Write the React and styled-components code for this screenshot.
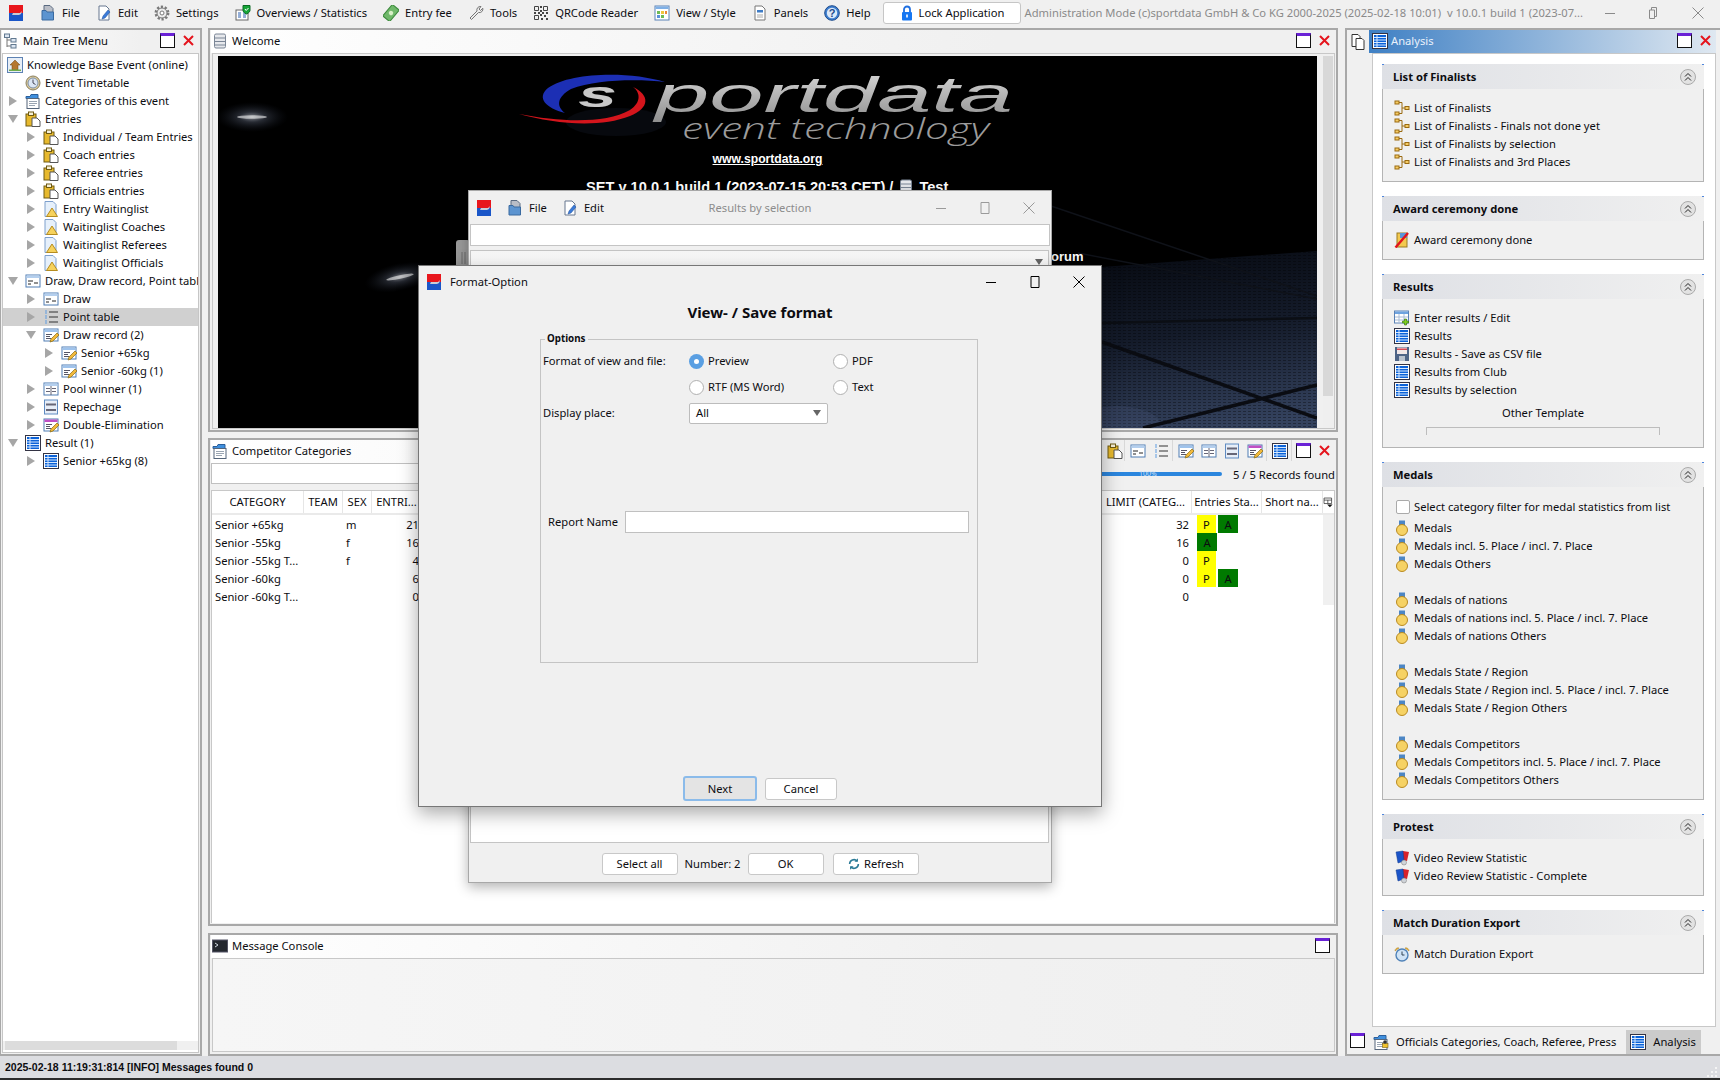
import React from 'react';
import styled, { createGlobalStyle } from 'styled-components';

const UI_FONT = '"Noto Sans", "Open Sans", sans-serif';

const GlobalStyle = createGlobalStyle`
  html, body {
    margin: 0;
    padding: 0;
    background: #f0f0f0;
    overflow: hidden;
  }
  * {
    box-sizing: border-box;
  }
`;

const IconSvg = styled.svg`
  flex: none;
  display: block;
  width: ${({ $size }) => $size || 16}px;
  height: ${({ $size }) => $size || 16}px;
`;

const page = 'M3 1h7l3 3v11H3z';
const sheet = (bar, lines) => (
  <>
    <rect x="1" y="2" width="14" height="12" fill="#fff" stroke="#4f7cb3" />
    <rect x="1.5" y="2.5" width="13" height="2.5" fill={bar} />
    {lines}
  </>
);
const pencil = <path d="M7 15l1-3 6-6 2 2-6 6z" fill="#f2b93b" stroke="#8a6a10" strokeWidth=".7" />;
const lineSet = (
  <path d="M3 7.5h6M3 9.5h4M3 11.5h5" stroke="#556" fill="none" />
);
const resultGlyph = (
  <>
    <rect x=".5" y=".5" width="15" height="15" fill="#fff" stroke="#334" />
    <rect x="2" y="2" width="12" height="12" fill="#0b62d8" />
    <path d="M2 4.500h12M2 7h12M2 9.500h12M2 12h12M5 2v12" stroke="#d6e8ff" />
  </>
);
const clipGlyph = (
  <>
    <rect x="1" y="3" width="10" height="12" fill="#e7b92d" stroke="#6f5a12" />
    <rect x="3.500" y="1" width="5" height="3.500" fill="#f6f0d8" stroke="#6f5a12" />
    <path d="M7 7h5l3 3v5.500H7z" fill="#fff" stroke="#555" />
  </>
);
const waitGlyph = (
  <>
    <path d="M2 .5h8l3 3v12H2z" fill="#e6f0fb" stroke="#7d9fcc" />
    <path d="M9 7l5.500 8.500h-11z" fill="#f6d25c" stroke="#b58c1f" />
  </>
);
const folderGlyph = (
  <>
    <path d="M1 3.500h4l1-2h7v4H1z" fill="#3f8fdd" stroke="#2a5f9c" />
    <rect x="2" y="5.500" width="12" height="10" fill="#fff" stroke="#55657a" />
    <path d="M4 8.500h8M4 10.500h8M4 12.500h6" stroke="#9aa5b2" />
  </>
);
const medalGlyph = (
  <>
    <rect x="5" y=".5" width="6" height="6" fill="#4d86c4" />
    <circle cx="8" cy="10" r="5.500" fill="#f6d264" stroke="#b98a20" />
  </>
);
const cardsGlyph = (
  <>
    <path d="M9 1l6 1-2 9-5-1z" fill="#d8202a" />
    <path d="M2 2l7-1 1 10-6 2z" fill="#1b54c8" stroke="#123a8c" strokeWidth=".5" />
    <circle cx="10" cy="12.500" r="2.500" fill="#cfd3d8" stroke="#777" strokeWidth=".5" />
  </>
);

const glyphs = {
  app: (
    <>
      <rect x="1" y="0" width="14" height="8" fill="#e8161c" />
      <rect x="1" y="8" width="14" height="8" fill="#1a56c8" />
      <path d="M4 10l1-2h7l2-2-1 3-2 1z" fill="#c9ccd6" />
    </>
  ),
  file: (
    <>
      <path d="M4 .5h6l3 3v5H4z" fill="#b9bdc6" stroke="#5a6a80" />
      <path d="M2 5.500h4l1 1.500h6.500v8H2z" fill="#5c94d0" stroke="#3a6aa0" />
    </>
  ),
  edit: (
    <>
      <path d={page} fill="#fff" stroke="#66778f" />
      <path d="M6 14l1-3 5-6 2 2-5 6z" fill="#3a7ad8" stroke="#1f4f98" strokeWidth=".5" />
    </>
  ),
  gear: (
    <>
      <circle cx="8" cy="8" r="6.200" fill="none" stroke="#7a7a7a" strokeWidth="2.500" strokeDasharray="2.200 1.700" />
      <circle cx="8" cy="8" r="5" fill="#ededed" stroke="#777" />
      <circle cx="8" cy="8" r="2" fill="#fff" stroke="#777" />
    </>
  ),
  overview: (
    <>
      <rect x="1" y="5" width="12" height="10" fill="#fff" stroke="#666" />
      <path d="M3 8h3M3 10h3M3 12h3M8 8h3M8 10h3M8 12h3" stroke="#2b5fb0" />
      <path d="M8 .5h7v5c0 2-3.500 3.500-3.500 3.500S8 7.500 8 5.500z" fill="#16a638" stroke="#0d6a25" />
      <path d="M10 4l1.200 1.500L13.500 3" stroke="#fff" fill="none" />
    </>
  ),
  money: (
    <g transform="rotate(-50 8 8)">
      <rect x=".5" y="3.500" width="15" height="9" rx="1" fill="#6fb86a" stroke="#3c8a3c" />
      <circle cx="8" cy="8" r="2.200" fill="#d8f0c8" />
    </g>
  ),
  wrench: <path d="M13 1.500a3.500 3.500 0 0 0-4 4.500L2 13l1.500 1.500 7-7a3.500 3.500 0 0 0 4.300-4.300L12.500 5.500 11 4z" fill="#eee" stroke="#777" />,
  qr: (
    <>
      <path d="M1.500 1.500h4v4h-4zM10.500 1.500h4v4h-4zM1.500 10.500h4v4h-4z" fill="none" stroke="#444" />
      <path d="M7 1h2v2H7zM7 5h2v2H7zM1 7h2v2H1zM5 7h2v2H5zM9 7h2v2H9zM13 7h2v2h-2zM7 9h2v2H7zM11 10h2v2h-2zM8 13h2v2H8zM13 13h2v2h-2z" fill="#444" />
    </>
  ),
  view: (
    <>
      <rect x="1" y="1" width="14" height="14" fill="#fff" stroke="#5b82b5" />
      <rect x="1.500" y="1.500" width="13" height="2.500" fill="#7fb0e6" />
      <path d="M3 6h3v3H3z" fill="#6fbb55" />
      <path d="M7 6h3v3H7z" fill="#f0c63c" />
      <path d="M11 6h2v3h-2z" fill="#e9893a" />
      <path d="M3 10h3v3H3z" fill="#5a92d8" />
      <path d="M7 10h3v3H7z" fill="#6fbb55" />
    </>
  ),
  panels: (
    <>
      <path d={page} fill="#fff" stroke="#777" />
      <rect x="5" y="5" width="6" height="2.500" fill="#3e7cc6" />
      <path d="M5 10h6M5 12h6" stroke="#aaa" />
    </>
  ),
  help: (
    <>
      <circle cx="8" cy="8" r="7.300" fill="#3f7fd0" stroke="#1d4b8c" />
      <circle cx="8" cy="8" r="5.200" fill="#dce9f8" />
      <text x="8" y="12" fontSize="11" fontWeight="700" textAnchor="middle" fill="#1d4b8c" fontFamily="Liberation Sans">?</text>
    </>
  ),
  lock: (
    <>
      <path d="M5 7V4.500a3 3 0 0 1 6 0V7" fill="none" stroke="#1f6fe0" strokeWidth="1.800" />
      <rect x="3" y="7" width="10" height="8.500" rx="1" fill="#1677f2" />
      <rect x="7.200" y="9.500" width="1.600" height="3" fill="#fff" />
    </>
  ),
  tree: (
    <>
      <path d="M4 2v12M4 7h5M4 13h5" stroke="#777" fill="none" />
      <rect x="1.500" y="1" width="5" height="3.500" fill="#dce6f2" stroke="#61788f" />
      <rect x="8" y="5.500" width="5" height="3.500" fill="#dce6f2" stroke="#61788f" />
      <rect x="8" y="11.500" width="5" height="3.500" fill="#dce6f2" stroke="#61788f" />
    </>
  ),
  stack: (
    <>
      <rect x="2.500" y="1" width="11" height="14" rx="1.500" fill="#e6e8ec" stroke="#7b8696" />
      <path d="M2.500 5h11M2.500 8.500h11M2.500 12h11" stroke="#7b8696" fill="none" />
    </>
  ),
  home: (
    <>
      <rect x=".5" y=".5" width="15" height="15" fill="#e7eef7" stroke="#5d82b3" />
      <path d="M8 3L3 8h2v5h6V8h2z" fill="#b5772f" stroke="#6f4415" strokeWidth=".5" />
      <rect x="2" y="12.500" width="12" height="1.500" fill="#6fae4d" />
    </>
  ),
  clock: (
    <>
      <circle cx="8" cy="8" r="7" fill="#dccb9a" stroke="#8a7f60" />
      <circle cx="8" cy="8" r="5" fill="#dbe6f4" stroke="#7c8fa8" />
      <path d="M8 4.500V8l2.500 1.500" stroke="#445" fill="none" />
    </>
  ),
  folder: folderGlyph,
  clip: clipGlyph,
  wait: waitGlyph,
  draw: sheet('#b4cfee', <path d="M3 8h5M9 10h4M3 11h3" stroke="#222" fill="none" />),
  points: (
    <>
      <path d="M2 2h2M2 4h2M2 7h2M2 9h2M2 12h2M2 14h2" stroke="#5c9be0" />
      <path d="M6 3h9M6 8h9M6 13h9" stroke="#333" />
    </>
  ),
  record: (
    <>
      {sheet('#9fc3ec', lineSet)}
      {pencil}
    </>
  ),
  pool: sheet('#b4cfee', <path d="M3 7.500h4M3 10.500h4M9 7.500h4M9 10.500h4M8 5v9" stroke="#667" fill="none" />),
  repechage: (
    <>
      <rect x="1.500" y="1" width="13" height="14" fill="#e7eef8" stroke="#5f8bc2" />
      <rect x="3" y="4.500" width="10" height="2" fill="#667" />
      <rect x="3" y="10" width="10" height="2" fill="#667" />
    </>
  ),
  double: (
    <>
      {sheet('#c04fc4', lineSet)}
      {pencil}
    </>
  ),
  result: resultGlyph,
  finalist: (
    <>
      <path d="M5 2.500h3v11H5M8 8h3" stroke="#9a6a10" fill="none" />
      <rect x="1" y="1" width="4" height="3" fill="#f5cc66" stroke="#9a6a10" />
      <rect x="1" y="12" width="4" height="3" fill="#f5cc66" stroke="#9a6a10" />
      <rect x="11" y="6.500" width="4" height="3" fill="#f5cc66" stroke="#9a6a10" />
    </>
  ),
  award: (
    <>
      <rect x="3" y="1" width="10" height="14" fill="#f3c94f" stroke="#9a7a20" />
      <rect x="6" y="1" width="7" height="5" fill="#5a96d8" />
      <path d="M1.500 15.500L14 1" stroke="#e2141c" strokeWidth="2.400" />
    </>
  ),
  enter: (
    <>
      <rect x=".5" y="1" width="14" height="12" fill="#fff" stroke="#5b82b5" />
      <rect x="1" y="1.500" width="13" height="2.500" fill="#6ea3df" />
      <path d="M1 7h13M1 10h13M5 4v9M10 4v9" stroke="#aabdd6" />
      <path d="M10.500 9h2v2h2v2h-2v2h-2v-2h-2v-2h2z" fill="#7fd11e" stroke="#2f6d0b" strokeWidth=".6" />
    </>
  ),
  floppy: (
    <>
      <rect x="1" y="1" width="14" height="14" fill="#4e6486" />
      <rect x="3" y="1.500" width="10" height="6.500" fill="#f1e7e7" />
      <rect x="3" y="2.500" width="10" height="1.500" fill="#d84c56" />
      <rect x="5" y="10" width="6" height="5" fill="#b9c2ce" />
    </>
  ),
  medal: medalGlyph,
  cards: cardsGlyph,
  alarm: (
    <>
      <path d="M1 5a3 3 0 0 1 4-3zM15 5a3 3 0 0 0-4-3z" fill="#f0b73c" stroke="#a47a1c" strokeWidth=".5" />
      <circle cx="8" cy="9" r="6" fill="#cfe3f6" stroke="#4f82b8" strokeWidth="1.400" />
      <path d="M8 5.500V9h2.500" stroke="#345" fill="none" />
    </>
  ),
  officials: (
    <>
      {folderGlyph}
      <rect x="9.500" y="9.500" width="5.500" height="4" fill="#f0c22e" stroke="#7a5f10" strokeWidth=".6" />
      <circle cx="12" cy="8" r="1.800" fill="#333" />
    </>
  ),
  refresh: (
    <>
      <path d="M3 8a5 5 0 0 1 8.500-3.500M13 8a5 5 0 0 1-8.500 3.500" fill="none" stroke="#2a7a96" strokeWidth="1.800" />
      <path d="M12.500 1.500v4h-4zM3.500 14.500v-4h4z" fill="#2a7a96" />
    </>
  ),
  console: (
    <>
      <rect x=".5" y="2" width="15" height="12" fill="#23272e" stroke="#556" />
      <path d="M3 5l3 2-3 2" stroke="#cfd6de" fill="none" />
    </>
  ),
  docs: (
    <>
      <path d="M2 .5h6l2 2v10H2z" fill="#fff" stroke="#333" />
      <path d="M6 4.500h6l2 2v9H6z" fill="#fff" stroke="#333" />
    </>
  ),
  columns: (
    <>
      <path d="M1.500 1.500h11v8h-11zM1.500 4.500h11M7 4.500v5" fill="none" stroke="#222" />
      <path d="M6 11h8l-4 4z" fill="#111" />
    </>
  ),
};

const Icon = ({ name, size }) => (
  <IconSvg $size={size} viewBox="0 0 16 16" aria-hidden="true">
    {glyphs[name]}
  </IconSvg>
);

const Screen = styled.div`
  width: 1720px;
  height: 1080px;
  position: relative;
  display: flex;
  flex-direction: column;
  overflow: hidden;
  background: #f0f0f0;
  color: #0c0c10;
  font-family: ${UI_FONT};
  font-size: 11.2px;
  line-height: 18px;
  white-space: nowrap;
`;

const MenuBar = styled.header`
  height: 28px;
  display: flex;
  align-items: center;
  padding: 0 0 2px 8px;
  flex: none;
`;

const MenuItems = styled.nav`
  display: flex;
  align-items: center;
  gap: 16px;
  margin-left: 16px;
`;

const MenuItem = styled.span`
  display: flex;
  align-items: center;
  gap: 6px;
`;

const LockButton = styled.button`
  height: 22px;
  width: 138px;
  margin-left: 12px;
  padding: 0 0 0 15px;
  display: flex;
  align-items: center;
  gap: 4px;
  background: #fff;
  border: 1px solid #c6c6c6;
  border-radius: 3px;
  font: inherit;
  color: inherit;
`;

const AppTitle = styled.span`
  margin-left: 4px;
  color: #8a8a8a;
`;

const WindowControls = styled.div`
  display: flex;
  height: 100%;
  margin-left: auto;
  justify-content: flex-end;
`;

const ControlButton = styled.span`
  width: 44px;
  display: flex;
  align-items: center;
  justify-content: center;
  color: ${({ $color }) => $color};
`;

const ControlSvg = styled.svg`
  width: 12px;
  height: 12px;
  fill: none;
  stroke: currentColor;
`;

const Controls = ({ color = '#000', restore }) => (
  <WindowControls>
    <ControlButton $color={color}>
      <ControlSvg viewBox="0 0 12 12"><path d="M1 6.500h10" /></ControlSvg>
    </ControlButton>
    <ControlButton $color={color}>
      <ControlSvg viewBox="0 0 12 12">
        {restore ? <path d="M3.500 3V.5h5v9H6.500M1.500 3h5v8.500h-5z" /> : <path d="M2 .5h8v11H2z" />}
      </ControlSvg>
    </ControlButton>
    <ControlButton $color={color}>
      <ControlSvg viewBox="0 0 12 12"><path d="M.5.5l11 11M11.500.5l-11 11" /></ControlSvg>
    </ControlButton>
  </WindowControls>
);

const Workspace = styled.main`
  flex: none;
  height: 1028px;
  display: flex;
  align-items: stretch;
`;

const Panel = styled.section`
  display: flex;
  flex-direction: column;
  min-height: 0;
  border: 2px solid #a8a8a8;
  padding: 0 1px 1px;
  background: #f0f0f0;
`;

const LeftPanel = styled(Panel)`
  width: 202px;
  flex: none;
  border-left-width: 1px;
`;

const CenterColumn = styled.div`
  width: 1130px;
  margin-left: 6px;
  flex: none;
  display: flex;
  flex-direction: column;
`;

const WelcomePanel = styled(Panel)`
  height: 404px;
`;

const CategoriesPanel = styled(Panel)`
  height: 488px;
  margin-top: 6px;
`;

const ConsolePanel = styled(Panel)`
  height: 123px;
  margin-top: 7px;
`;

const TitleBar = styled.div`
  height: 23px;
  flex: none;
  display: flex;
  align-items: center;
  gap: 4px;
  padding: 0 5px 2px 1px;
  background: linear-gradient(90deg, #fff, #f0f0f0 70%);
`;

const ViewActions = styled.div`
  margin-left: auto;
  display: flex;
  align-items: center;
  gap: 8px;
`;

const MaxButton = styled.span`
  display: block;
  flex: none;
  width: 15px;
  height: 15px;
  background: #fff;
  border: 1px solid #111;
  border-top: 3px solid #6a22d6;
`;

const CloseSvg = styled.svg`
  display: block;
  width: 11px;
  height: 11px;
  stroke: #e5141d;
  stroke-width: 2;
`;

const CloseMark = () => (
  <CloseSvg viewBox="0 0 11 11"><path d="M1 1l9 9M10 1l-9 9" /></CloseSvg>
);

const TreeBox = styled.div`
  flex: 1;
  min-height: 0;
  display: flex;
  flex-direction: column;
  background: #fff;
  border: 1px solid #c6c6c6;
`;

const Tree = styled.ul`
  flex: 1;
  list-style: none;
  margin: 0;
  padding: 2px 0 0;
  overflow: hidden;
`;

const TreeRow = styled.li`
  height: 18px;
  display: flex;
  align-items: center;
  gap: 4px;
  background: ${({ $selected }) => ($selected ? '#d0d0d0' : 'transparent')};
`;

const Indent = styled.span`
  flex: none;
  display: flex;
  justify-content: flex-end;
  align-items: center;
  width: ${({ $level }) => 4 + $level * 18}px;
  margin-right: -4px;
`;

const Expander = styled.span`
  display: block;
  width: 0;
  height: 0;
  ${({ $open }) =>
    $open
      ? `border-top: 8px solid #a6a6a6;
         border-left: 5px solid transparent;
         border-right: 5px solid transparent;
         margin-right: 7px;`
      : `border-left: 8px solid #a6a6a6;
         border-top: 5px solid transparent;
         border-bottom: 5px solid transparent;
         margin-right: 8px;`}
`;

const HScroll = styled.div`
  height: 9px;
  flex: none;
  background: #f0f0f0;
  margin-bottom: 2px;
`;

const HThumb = styled.div`
  height: 100%;
  width: 172px;
  margin-left: 2px;
  background: #dcdcdc;
`;

const treeItems = [
  { level: 0, icon: 'home', label: 'Knowledge Base Event (online)' },
  { level: 1, icon: 'clock', label: 'Event Timetable' },
  { level: 1, icon: 'folder', label: 'Categories of this event', state: 'closed' },
  { level: 1, icon: 'clip', label: 'Entries', state: 'open' },
  { level: 2, icon: 'clip', label: 'Individual / Team Entries', state: 'closed' },
  { level: 2, icon: 'clip', label: 'Coach entries', state: 'closed' },
  { level: 2, icon: 'clip', label: 'Referee entries', state: 'closed' },
  { level: 2, icon: 'clip', label: 'Officials entries', state: 'closed' },
  { level: 2, icon: 'wait', label: 'Entry Waitinglist', state: 'closed' },
  { level: 2, icon: 'wait', label: 'Waitinglist Coaches', state: 'closed' },
  { level: 2, icon: 'wait', label: 'Waitinglist Referees', state: 'closed' },
  { level: 2, icon: 'wait', label: 'Waitinglist Officials', state: 'closed' },
  { level: 1, icon: 'draw', label: 'Draw, Draw record, Point table', state: 'open' },
  { level: 2, icon: 'draw', label: 'Draw', state: 'closed' },
  { level: 2, icon: 'points', label: 'Point table', state: 'closed', selected: true },
  { level: 2, icon: 'record', label: 'Draw record (2)', state: 'open' },
  { level: 3, icon: 'record', label: 'Senior +65kg', state: 'closed' },
  { level: 3, icon: 'record', label: 'Senior -60kg (1)', state: 'closed' },
  { level: 2, icon: 'pool', label: 'Pool winner (1)', state: 'closed' },
  { level: 2, icon: 'repechage', label: 'Repechage', state: 'closed' },
  { level: 2, icon: 'double', label: 'Double-Elimination', state: 'closed' },
  { level: 1, icon: 'result', label: 'Result (1)', state: 'open' },
  { level: 2, icon: 'result', label: 'Senior +65kg (8)', state: 'closed' },
];

/* welcome picture */
const ContentFrame = styled.div`
  flex: 1;
  min-height: 0;
  display: flex;
  justify-content: space-between;
  border: 1px solid #c8c8c8;
  margin-left: 1px;
  padding: 2px 1px 0 5px;
`;

const Picture = styled.div`
  width: 1099px;
  height: 372px;
  position: relative;
  overflow: hidden;
  background: #000;
`;

const PictureArt = styled.svg`
  display: block;
  width: 100%;
  height: 100%;
`;

const PictureLink = styled.a`
  position: absolute;
  left: 0;
  right: 0;
  top: 95px;
  text-align: center;
  color: #fff;
  font: 700 12.2px/16px 'Liberation Sans', sans-serif;
  text-decoration: underline;
`;

const PictureVersion = styled.div`
  position: absolute;
  left: 368px;
  top: 122px;
  display: flex;
  align-items: center;
  gap: 5px;
  color: #fff;
  font: 700 14.6px/18px 'Liberation Sans', sans-serif;
`;

const PictureForum = styled.span`
  position: absolute;
  left: 825px;
  top: 193px;
  color: #fff;
  font: 700 13px/16px 'Liberation Sans', sans-serif;
`;

const VScroll = styled.div`
  width: 10px;
  background: #efefef;
  align-self: stretch;
`;

const VThumb = styled.div`
  height: 340px;
  background: #d8d8d8;
`;

const WelcomeArt = () => (
  <PictureArt viewBox="0 0 1099 372">
    <defs>
      <radialGradient id="flare">
        <stop offset="0" stopColor="#e8ecf4" />
        <stop offset=".35" stopColor="#7f8ba6" stopOpacity=".5" />
        <stop offset="1" stopColor="#27324a" stopOpacity="0" />
      </radialGradient>
      <linearGradient id="floor" x1=".35" y1="0" x2=".85" y2="1">
        <stop offset="0" stopColor="#03050a" />
        <stop offset=".55" stopColor="#141b2a" />
        <stop offset="1" stopColor="#34425e" />
      </linearGradient>
      <pattern id="mesh" width="5" height="3" patternUnits="userSpaceOnUse">
        <path d="M0 1.500h3" stroke="#000" strokeOpacity=".35" />
      </pattern>
      <linearGradient id="chrome" x1="0" y1="0" x2="0" y2="1">
        <stop offset="0" stopColor="#dcdcdc" />
        <stop offset="1" stopColor="#8e8e8e" />
      </linearGradient>
    </defs>
    <rect width="1099" height="372" fill="#000" />
    <polygon points="500,372 830,215 1099,195 1099,372" fill="url(#floor)" />
    <polygon points="500,372 830,215 1099,195 1099,372" fill="url(#mesh)" />
    <ellipse cx="899" cy="372" rx="45" ry="22" fill="#4c5c80" opacity=".22" />
    <path d="M830 149L1099 240M860 197L1099 243" stroke="#0f1219" strokeWidth="1.500" fill="none" />
    <path d="M884 267L1099 262" stroke="#0b0e14" strokeWidth="2.500" fill="none" />
    <path d="M884 286L1099 362M925 372L1099 329" stroke="#0a0c12" strokeWidth="3.500" fill="none" />
    <ellipse cx="34" cy="61" rx="36" ry="15" fill="url(#flare)" opacity=".6" />
    <ellipse cx="34" cy="61" rx="15" ry="1.800" fill="#fff" opacity=".55" />
    <ellipse cx="182" cy="221" rx="36" ry="14" fill="url(#flare)" opacity=".55" transform="rotate(-12 182 221)" />
    <ellipse cx="182" cy="221" rx="14" ry="1.800" fill="#fff" opacity=".55" transform="rotate(-12 182 221)" />
    <ellipse cx="398" cy="66" rx="50" ry="14" fill="#2c3a58" opacity=".16" />
    <rect x="238" y="184" width="14" height="30" rx="3" fill="#9a9a9a" />
    <path d="M244 196v12M247 196v12" stroke="#6c6c6c" />
    <g transform="translate(-218 -56)">
      <path d="M665 82C630 71 570 72 548 88c-12 10-2 20 17 25-9-7-8-16 6-24 25-10 69-10 94-7z" fill="#1c2fb4" />
      <path d="M519 114c41 8 86 10 111-4 12-8 10-18 3-23 17 8 17 21-3 29-30 12-75 8-111-2z" fill="#d4151c" />
      <text x="578" y="107" fontFamily="Liberation Sans" fontWeight="700" fontStyle="italic" fontSize="36" fill="#c8c8c8" textLength="39" lengthAdjust="spacingAndGlyphs">s</text>
      <text x="655" y="112" fontFamily="Liberation Sans" fontStyle="italic" fontSize="50" fill="url(#chrome)" textLength="358" lengthAdjust="spacingAndGlyphs">portdata</text>
      <text x="682" y="139" fontFamily="Open Sans" fontWeight="300" fontStyle="italic" fontSize="30" fill="#9c9c9c" textLength="307" lengthAdjust="spacingAndGlyphs">event technology</text>
    </g>
  </PictureArt>
);

/* categories table */
const ToolStrip = styled.div`
  display: flex;
  align-items: center;
  margin-right: -4px;
`;

const ToolGroup = styled.div`
  display: flex;
  align-items: center;
  gap: 7px;
  height: 21px;
  padding: 0 3px 0 5px;
  border-right: 1px solid #d8d8d8;
  &:first-child {
    padding-right: 1px;
  }
`;

const SearchRow = styled.div`
  height: 22px;
  flex: none;
  display: flex;
  align-items: flex-start;
`;

const SearchField = styled.div`
  width: 700px;
  height: 21px;
  background: #fff;
  border: 1px solid #c0c0c0;
`;

const ProgressBar = styled.div`
  position: relative;
  width: 148px;
  height: 4px;
  margin-left: 163px;
  margin-top: 9px;
  background: #2b86de;
  border-radius: 2px;
`;

const ProgressLabel = styled.span`
  position: absolute;
  left: 0;
  right: 0;
  top: -2px;
  text-align: center;
  font-size: 7px;
  line-height: 8px;
  color: #cfe0f4;
`;

const RecordCount = styled.span`
  margin-left: 11px;
  margin-top: 3px;
`;

const TableBox = styled.div`
  flex: 1;
  min-height: 0;
  margin-top: 5px;
  background: #fff;
  border: 1px solid #c8c8c8;
  border-bottom: 0;
`;

const GRID = '92px 39px 29px 50px 1fr 92px 70px 61px 11px';

const TableRow = styled.div`
  display: grid;
  grid-template-columns: ${GRID};
  height: 18px;
  align-items: center;
`;

const HeaderRow = styled(TableRow)`
  height: 24px;
  border-bottom: 2px solid #eaeaea;
`;

const HeadCell = styled.div`
  height: 100%;
  display: flex;
  align-items: center;
  justify-content: center;
  overflow: hidden;
  border-right: 1px solid #e6e6e6;
`;

const Cell = styled.div`
  height: 18px;
  line-height: 20px;
  padding: 0 3px;
  overflow: hidden;
  text-align: ${({ $align }) => $align || 'left'};
`;

const StatusCell = styled.div`
  display: flex;
  gap: 2px;
  padding-left: 5px;
  height: 18px;
`;

const Badge = styled.span`
  width: ${({ $kind }) => ($kind === 'P' ? 19 : 20)}px;
  height: 18px;
  line-height: 20px;
  overflow: hidden;
  text-align: center;
  background: ${({ $kind }) => ($kind === 'P' ? '#ffff00' : '#007a00')};
`;

const CornerStrip = styled.div`
  background: #f0f0f0;
  height: 18px;
`;

const categoryRows = [
  { name: 'Senior +65kg', sex: 'm', entries: 21, limit: 32, badges: ['P', 'A'] },
  { name: 'Senior -55kg', sex: 'f', entries: 16, limit: 16, badges: ['A'] },
  { name: 'Senior -55kg T...', sex: 'f', entries: 4, limit: 0, badges: ['P'] },
  { name: 'Senior -60kg', sex: '', entries: 6, limit: 0, badges: ['P', 'A'] },
  { name: 'Senior -60kg T...', sex: '', entries: 0, limit: 0, badges: [] },
];

const ConsoleBody = styled.div`
  flex: 1;
  margin: 0 0 1px 1px;
  border: 1px solid #c8c8c8;
  background: linear-gradient(90deg, #f6f6f6, #efefef);
`;

/* right view */
const RightPanel = styled(Panel)`
  width: 375px;
  margin-left: 7px;
  flex: none;
  border-right-width: 0;
  padding: 0 4px 0 0;
`;

const RightHead = styled.div`
  height: 23px;
  flex: none;
  display: flex;
  align-items: center;
`;

const StackTab = styled.span`
  width: 22px;
  flex: none;
  display: flex;
  justify-content: center;
`;

const BlueTitle = styled(TitleBar)`
  flex: 1;
  color: #e9f1fb;
  padding-left: 3px;
  gap: 3px;
  background: linear-gradient(90deg, #3f80c4, #dfe8f1);
`;

const RightBody = styled.div`
  flex: 1;
  min-height: 0;
  margin-left: 25px;
  background: #fff;
  border: 1px solid #c8c8c8;
  padding: 10px 11px 0 9px;
  display: flex;
  flex-direction: column;
  gap: 14px;
`;

const Section = styled.article`
  position: relative;
`;

const SectionHead = styled.div`
  height: 25px;
  display: flex;
  align-items: center;
  justify-content: space-between;
  padding: 0 8px 0 11px;
  font-weight: 700;
  background: linear-gradient(90deg, #dee0e5, #f0f0f0);
  &::before,
  &::after {
    content: '';
    position: absolute;
    top: 0;
    width: 2px;
    height: 1px;
    background: #4f86dc;
  }
  &::before {
    left: 0;
  }
  &::after {
    right: 0;
  }
`;

const ChevronSvg = styled.svg`
  width: 16px;
  height: 16px;
  display: block;
`;

const Collapse = () => (
  <ChevronSvg viewBox="0 0 16 16">
    <circle cx="8" cy="8" r="7.500" fill="#e2e2e2" stroke="#aaa" />
    <path d="M5 7.500l3-3 3 3M5 11.500l3-3 3 3" fill="none" stroke="#222" />
  </ChevronSvg>
);

const SectionBody = styled.div`
  background: #f0f0f0;
  border: 1px solid #b4b4b4;
  border-top: 0;
  padding: 10px 11px;
`;

const ActionRow = styled.div`
  height: 18px;
  display: flex;
  align-items: center;
  gap: 4px;
`;

const RowGap = styled.div`
  height: 18px;
`;

const CenteredLabel = styled.div`
  margin-top: 5px;
  height: 18px;
  text-align: center;
`;

const TemplateFrame = styled.div`
  width: 234px;
  height: 8px;
  margin: 5px 0 2px 32px;
  border: 1px solid #bdbdbd;
  border-bottom: 0;
`;

const CheckRow = styled(ActionRow)`
  height: 20px;
  margin-bottom: 2px;
  gap: 4px;
  padding-left: 2px;
`;

const CheckBox = styled.span`
  width: 14px;
  height: 14px;
  background: #fff;
  border: 1px solid #aaa;
  border-radius: 2px;
`;

const sections = [
  {
    title: 'List of Finalists',
    items: [
      ['finalist', 'List of Finalists'],
      ['finalist', 'List of Finalists - Finals not done yet'],
      ['finalist', 'List of Finalists by selection'],
      ['finalist', 'List of Finalists and 3rd Places'],
    ],
  },
  { title: 'Award ceremony done', items: [['award', 'Award ceremony done']] },
  {
    title: 'Results',
    items: [
      ['enter', 'Enter results / Edit'],
      ['result', 'Results'],
      ['floppy', 'Results - Save as CSV file'],
      ['result', 'Results from Club'],
      ['result', 'Results by selection'],
    ],
    template: true,
  },
  {
    title: 'Medals',
    check: 'Select category filter for medal statistics from list',
    items: [
      ['medal', 'Medals'],
      ['medal', 'Medals incl. 5. Place / incl. 7. Place'],
      ['medal', 'Medals Others'],
      null,
      ['medal', 'Medals of nations'],
      ['medal', 'Medals of nations incl. 5. Place / incl. 7. Place'],
      ['medal', 'Medals of nations Others'],
      null,
      ['medal', 'Medals State / Region'],
      ['medal', 'Medals State / Region incl. 5. Place / incl. 7. Place'],
      ['medal', 'Medals State / Region Others'],
      null,
      ['medal', 'Medals Competitors'],
      ['medal', 'Medals Competitors incl. 5. Place / incl. 7. Place'],
      ['medal', 'Medals Competitors Others'],
    ],
  },
  {
    title: 'Protest',
    items: [
      ['cards', 'Video Review Statistic'],
      ['cards', 'Video Review Statistic - Complete'],
    ],
  },
  { title: 'Match Duration Export', items: [['alarm', 'Match Duration Export']] },
];

const TabStrip = styled.div`
  height: 27px;
  flex: none;
  display: flex;
  align-items: flex-end;
  padding-left: 3px;
`;

const StripMax = styled(MaxButton)`
  align-self: center;
`;

const Tab = styled.span`
  display: flex;
  align-items: center;
  gap: 7px;
  height: 24px;
  padding: 0 8px 0 4px;
  margin-left: 4px;
`;

const ActiveTab = styled(Tab)`
  width: 75px;
  margin-left: 2px;
  background: #cbcbcb;
`;

const StatusBar = styled.footer`
  flex: 1;
  display: flex;
  align-items: center;
  justify-content: space-between;
  padding-left: 5px;
  background: #dcdde1;
  border-bottom: 2px solid #2c2c2c;
  font: 700 10.5px/14px 'Liberation Sans', sans-serif;
`;

const GripSvg = styled.svg`
  width: 12px;
  height: 12px;
  align-self: flex-end;
  margin-right: 2px;
`;

/* floating windows */
const BackWindow = styled.div`
  position: absolute;
  left: 468px;
  top: 190px;
  width: 584px;
  height: 693px;
  display: flex;
  flex-direction: column;
  background: #f0f0f0;
  border: 1px solid #a8a8a8;
  box-shadow: 0 4px 12px rgba(0, 0, 0, 0.3);
`;

const WindowBar = styled.div`
  height: ${({ $height }) => $height}px;
  flex: none;
  display: grid;
  grid-template-columns: 1fr auto 1fr;
  align-items: center;
`;

const BarLeft = styled.div`
  display: flex;
  align-items: center;
  padding-left: 7px;
`;

const BarMenu = styled.div`
  display: flex;
  align-items: center;
  gap: 15px;
  margin-left: 15px;
`;

const DimTitle = styled.span`
  color: #8c8c8c;
`;

const BackField = styled.div`
  height: 22px;
  flex: none;
  margin: 0 1px;
  background: #fff;
  border: 1px solid #c4c4c4;
`;

const BackList = styled.div`
  flex: 1;
  margin: 4px 2px 0 1px;
  background: linear-gradient(#f6f6f6, #fff 20px);
  border: 1px solid #c4c4c4;
  position: relative;
`;

const ListArrow = styled.span`
  position: absolute;
  right: 5px;
  top: 8px;
  width: 0;
  height: 0;
  border-top: 6px solid #666;
  border-left: 4px solid transparent;
  border-right: 4px solid transparent;
`;

const BackFooter = styled.div`
  flex: none;
  height: 39px;
  display: flex;
  align-items: center;
  justify-content: center;
  gap: 7px;
  padding-top: 3px;
`;

const PushButton = styled.button`
  height: 22px;
  width: ${({ $w }) => $w}px;
  padding: 0;
  margin-left: ${({ $ml }) => $ml || 0}px;
  display: flex;
  align-items: center;
  justify-content: center;
  gap: 3px;
  background: #fff;
  border: 1px solid #c8c8c8;
  border-radius: 3px;
  font: inherit;
  color: inherit;
`;

const FocusButton = styled(PushButton)`
  height: 25px;
  background: #e4e4e4;
  border: 2px solid #8bbbea;
`;

const Dialog = styled.div`
  position: absolute;
  left: 418px;
  top: 265px;
  width: 684px;
  height: 542px;
  display: flex;
  flex-direction: column;
  background: #f0f0f0;
  border: 1px solid #777;
  box-shadow: 0 6px 18px rgba(0, 0, 0, 0.35);
`;

const DialogTitle = styled.span`
  margin-left: 8px;
`;

const DialogHeading = styled.h1`
  margin: 4px 0 0;
  text-align: center;
  font-size: 15px;
  line-height: 20px;
  font-weight: 700;
  height: 20px;
`;

const OptionsBox = styled.fieldset`
  width: 438px;
  height: 330px;
  margin: 11px 0 0 121px;
  padding: 3px 0 0 2px;
  border: 1px solid #c4c4c4;
  min-width: 0;
`;

const OptionsLegend = styled.legend`
  font-size: 9.8px;
  font-weight: 700;
  line-height: 12px;
  padding: 0 2px;
  margin-left: 2px;
`;

const OptionsGrid = styled.div`
  display: grid;
  grid-template-columns: 146px 144px 1fr;
  grid-auto-rows: 26px;
  align-items: center;
`;

const RadioLabel = styled.label`
  display: flex;
  align-items: center;
  gap: 4px;
`;

const RadioDot = styled.span`
  width: 15px;
  height: 15px;
  border-radius: 50%;
  background: ${({ $on }) => ($on ? '#5a9fe2' : '#fff')};
  border: ${({ $on }) => ($on ? '0' : '1px solid #b0b0b0')};
  display: flex;
  align-items: center;
  justify-content: center;
  &::after {
    content: '';
    width: 5px;
    height: 5px;
    border-radius: 50%;
    background: ${({ $on }) => ($on ? '#fff' : 'transparent')};
  }
`;

const SelectBox = styled.div`
  width: 139px;
  height: 21px;
  display: flex;
  align-items: center;
  justify-content: space-between;
  padding: 0 6px;
  background: #fff;
  border: 1px solid #bcbcbc;
  border-radius: 2px;
`;

const SelectArrow = styled.span`
  width: 0;
  height: 0;
  border-top: 6px solid #666;
  border-left: 4px solid transparent;
  border-right: 4px solid transparent;
`;

const ReportRow = styled.div`
  display: flex;
  align-items: center;
  margin: 85px 0 0 5px;
`;

const ReportLabel = styled.span`
  width: 77px;
`;

const ReportInput = styled.div`
  width: 344px;
  height: 22px;
  background: #fff;
  border: 1px solid #c0c0c0;
`;

const DialogButtons = styled.div`
  margin-top: auto;
  padding-bottom: 5px;
  display: flex;
  align-items: center;
  justify-content: center;
  gap: 8px;
`;

const App = () => (
  <>
    <GlobalStyle />
    <Screen>
      <MenuBar>
        <Icon name="app" />
        <MenuItems>
          <MenuItem><Icon name="file" />File</MenuItem>
          <MenuItem><Icon name="edit" />Edit</MenuItem>
          <MenuItem><Icon name="gear" />Settings</MenuItem>
          <MenuItem><Icon name="overview" />Overviews / Statistics</MenuItem>
          <MenuItem><Icon name="money" />Entry fee</MenuItem>
          <MenuItem><Icon name="wrench" />Tools</MenuItem>
          <MenuItem><Icon name="qr" />QRCode Reader</MenuItem>
          <MenuItem><Icon name="view" />View / Style</MenuItem>
          <MenuItem><Icon name="panels" />Panels</MenuItem>
          <MenuItem><Icon name="help" />Help</MenuItem>
        </MenuItems>
        <LockButton><Icon name="lock" />Lock Application</LockButton>
        <AppTitle>Administration Mode (c)sportdata GmbH &amp; Co KG 2000-2025 (2025-02-18 10:01)&nbsp; v 10.0.1 build 1 (2023-07...</AppTitle>
        <Controls color="#8a8a8a" restore />
      </MenuBar>

      <Workspace>
        <LeftPanel>
          <TitleBar>
            <Icon name="tree" />
            Main Tree Menu
            <ViewActions><MaxButton /><CloseMark /></ViewActions>
          </TitleBar>
          <TreeBox>
            <Tree>
              {treeItems.map((item) => (
                <TreeRow key={item.level + item.label} $selected={item.selected}>
                  <Indent $level={item.level}>
                    {item.state && <Expander $open={item.state === 'open'} />}
                  </Indent>
                  <Icon name={item.icon} />
                  {item.label}
                </TreeRow>
              ))}
            </Tree>
            <HScroll><HThumb /></HScroll>
          </TreeBox>
        </LeftPanel>

        <CenterColumn>
          <WelcomePanel>
            <TitleBar>
              <Icon name="stack" />
              Welcome
              <ViewActions><MaxButton /><CloseMark /></ViewActions>
            </TitleBar>
            <ContentFrame>
              <Picture>
                <WelcomeArt />
                <PictureLink>www.sportdata.org</PictureLink>
                <PictureVersion>
                  SET v 10.0.1 build 1 (2023-07-15 20:53 CET) / <Icon name="stack" /> Test
                </PictureVersion>
                <PictureForum>Forum</PictureForum>
              </Picture>
              <VScroll><VThumb /></VScroll>
            </ContentFrame>
          </WelcomePanel>

          <CategoriesPanel>
            <TitleBar>
              <Icon name="folder" />
              Competitor Categories
              <ViewActions>
                <ToolStrip>
                  <ToolGroup><Icon name="clip" /></ToolGroup>
                  <ToolGroup><Icon name="draw" /><Icon name="points" /></ToolGroup>
                  <ToolGroup><Icon name="record" /><Icon name="pool" /><Icon name="repechage" /><Icon name="double" /></ToolGroup>
                  <ToolGroup><Icon name="result" /></ToolGroup>
                </ToolStrip>
                <MaxButton />
                <CloseMark />
              </ViewActions>
            </TitleBar>
            <SearchRow>
              <SearchField />
              <ProgressBar><ProgressLabel>100%</ProgressLabel></ProgressBar>
              <RecordCount>5 / 5 Records found</RecordCount>
            </SearchRow>
            <TableBox>
              <HeaderRow>
                <HeadCell>CATEGORY</HeadCell>
                <HeadCell>TEAM</HeadCell>
                <HeadCell>SEX</HeadCell>
                <HeadCell>ENTRI...</HeadCell>
                <HeadCell />
                <HeadCell>LIMIT (CATEG...</HeadCell>
                <HeadCell>Entries Sta...</HeadCell>
                <HeadCell>Short na...</HeadCell>
                <Icon name="columns" size={11} />
              </HeaderRow>
              {categoryRows.map((row) => (
                <TableRow key={row.name}>
                  <Cell>{row.name}</Cell>
                  <Cell />
                  <Cell>{row.sex}</Cell>
                  <Cell $align="right">{row.entries}</Cell>
                  <Cell />
                  <Cell $align="right">{row.limit}</Cell>
                  <StatusCell>
                    {row.badges.map((kind) => (
                      <Badge key={kind} $kind={kind}>{kind}</Badge>
                    ))}
                  </StatusCell>
                  <Cell />
                  <CornerStrip />
                </TableRow>
              ))}
            </TableBox>
          </CategoriesPanel>

          <ConsolePanel>
            <TitleBar>
              <Icon name="console" />
              Message Console
              <ViewActions><MaxButton /></ViewActions>
            </TitleBar>
            <ConsoleBody />
          </ConsolePanel>
        </CenterColumn>

        <RightPanel>
          <RightHead>
            <StackTab><Icon name="docs" /></StackTab>
            <BlueTitle>
              <Icon name="result" />
              Analysis
              <ViewActions><MaxButton /><CloseMark /></ViewActions>
            </BlueTitle>
          </RightHead>
          <RightBody>
            {sections.map((section) => (
              <Section key={section.title}>
                <SectionHead>
                  {section.title}
                  <Collapse />
                </SectionHead>
                <SectionBody>
                  {section.check && (
                    <CheckRow><CheckBox />{section.check}</CheckRow>
                  )}
                  {section.items.map((item, i) =>
                    item ? (
                      <ActionRow key={item[1]}><Icon name={item[0]} />{item[1]}</ActionRow>
                    ) : (
                      <RowGap key={`gap-${i}`} />
                    ),
                  )}
                  {section.template && (
                    <>
                      <CenteredLabel>Other Template</CenteredLabel>
                      <TemplateFrame />
                    </>
                  )}
                </SectionBody>
              </Section>
            ))}
          </RightBody>
          <TabStrip>
            <StripMax />
            <Tab><Icon name="officials" />Officials Categories, Coach, Referee, Press</Tab>
            <ActiveTab><Icon name="result" />Analysis</ActiveTab>
          </TabStrip>
        </RightPanel>
      </Workspace>

      <StatusBar>
        2025-02-18 11:19:31:814 [INFO] Messages found 0
        <GripSvg viewBox="0 0 12 12">
          <path d="M9 1h2v2H9zM5 5h2v2H5zM9 5h2v2H9zM1 9h2v2H1zM5 9h2v2H5zM9 9h2v2H9z" fill="#f4f4f4" />
        </GripSvg>
      </StatusBar>

      <BackWindow>
        <WindowBar $height={33}>
          <BarLeft>
            <Icon name="app" />
            <BarMenu>
              <MenuItem><Icon name="file" />File</MenuItem>
              <MenuItem><Icon name="edit" />Edit</MenuItem>
            </BarMenu>
          </BarLeft>
          <DimTitle>Results by selection</DimTitle>
          <Controls color="#9a9a9a" />
        </WindowBar>
        <BackField />
        <BackList><ListArrow /></BackList>
        <BackFooter>
          <PushButton $w={76}>Select all</PushButton>
          <span>Number: 2</span>
          <PushButton $w={76}>OK</PushButton>
          <PushButton $w={86} $ml={2}><Icon name="refresh" size={14} />Refresh</PushButton>
        </BackFooter>
      </BackWindow>

      <Dialog>
        <WindowBar $height={32}>
          <BarLeft>
            <Icon name="app" />
            <DialogTitle>Format-Option</DialogTitle>
          </BarLeft>
          <span />
          <Controls />
        </WindowBar>
        <DialogHeading>View- / Save format</DialogHeading>
        <OptionsBox>
          <OptionsLegend>Options</OptionsLegend>
          <OptionsGrid>
            <span>Format of view and file:</span>
            <RadioLabel><RadioDot $on />Preview</RadioLabel>
            <RadioLabel><RadioDot />PDF</RadioLabel>
            <span />
            <RadioLabel><RadioDot />RTF (MS Word)</RadioLabel>
            <RadioLabel><RadioDot />Text</RadioLabel>
            <span>Display place:</span>
            <SelectBox>All<SelectArrow /></SelectBox>
          </OptionsGrid>
          <ReportRow>
            <ReportLabel>Report Name</ReportLabel>
            <ReportInput />
          </ReportRow>
        </OptionsBox>
        <DialogButtons>
          <FocusButton $w={74}>Next</FocusButton>
          <PushButton $w={72}>Cancel</PushButton>
        </DialogButtons>
      </Dialog>
    </Screen>
  </>
);

export default App;
